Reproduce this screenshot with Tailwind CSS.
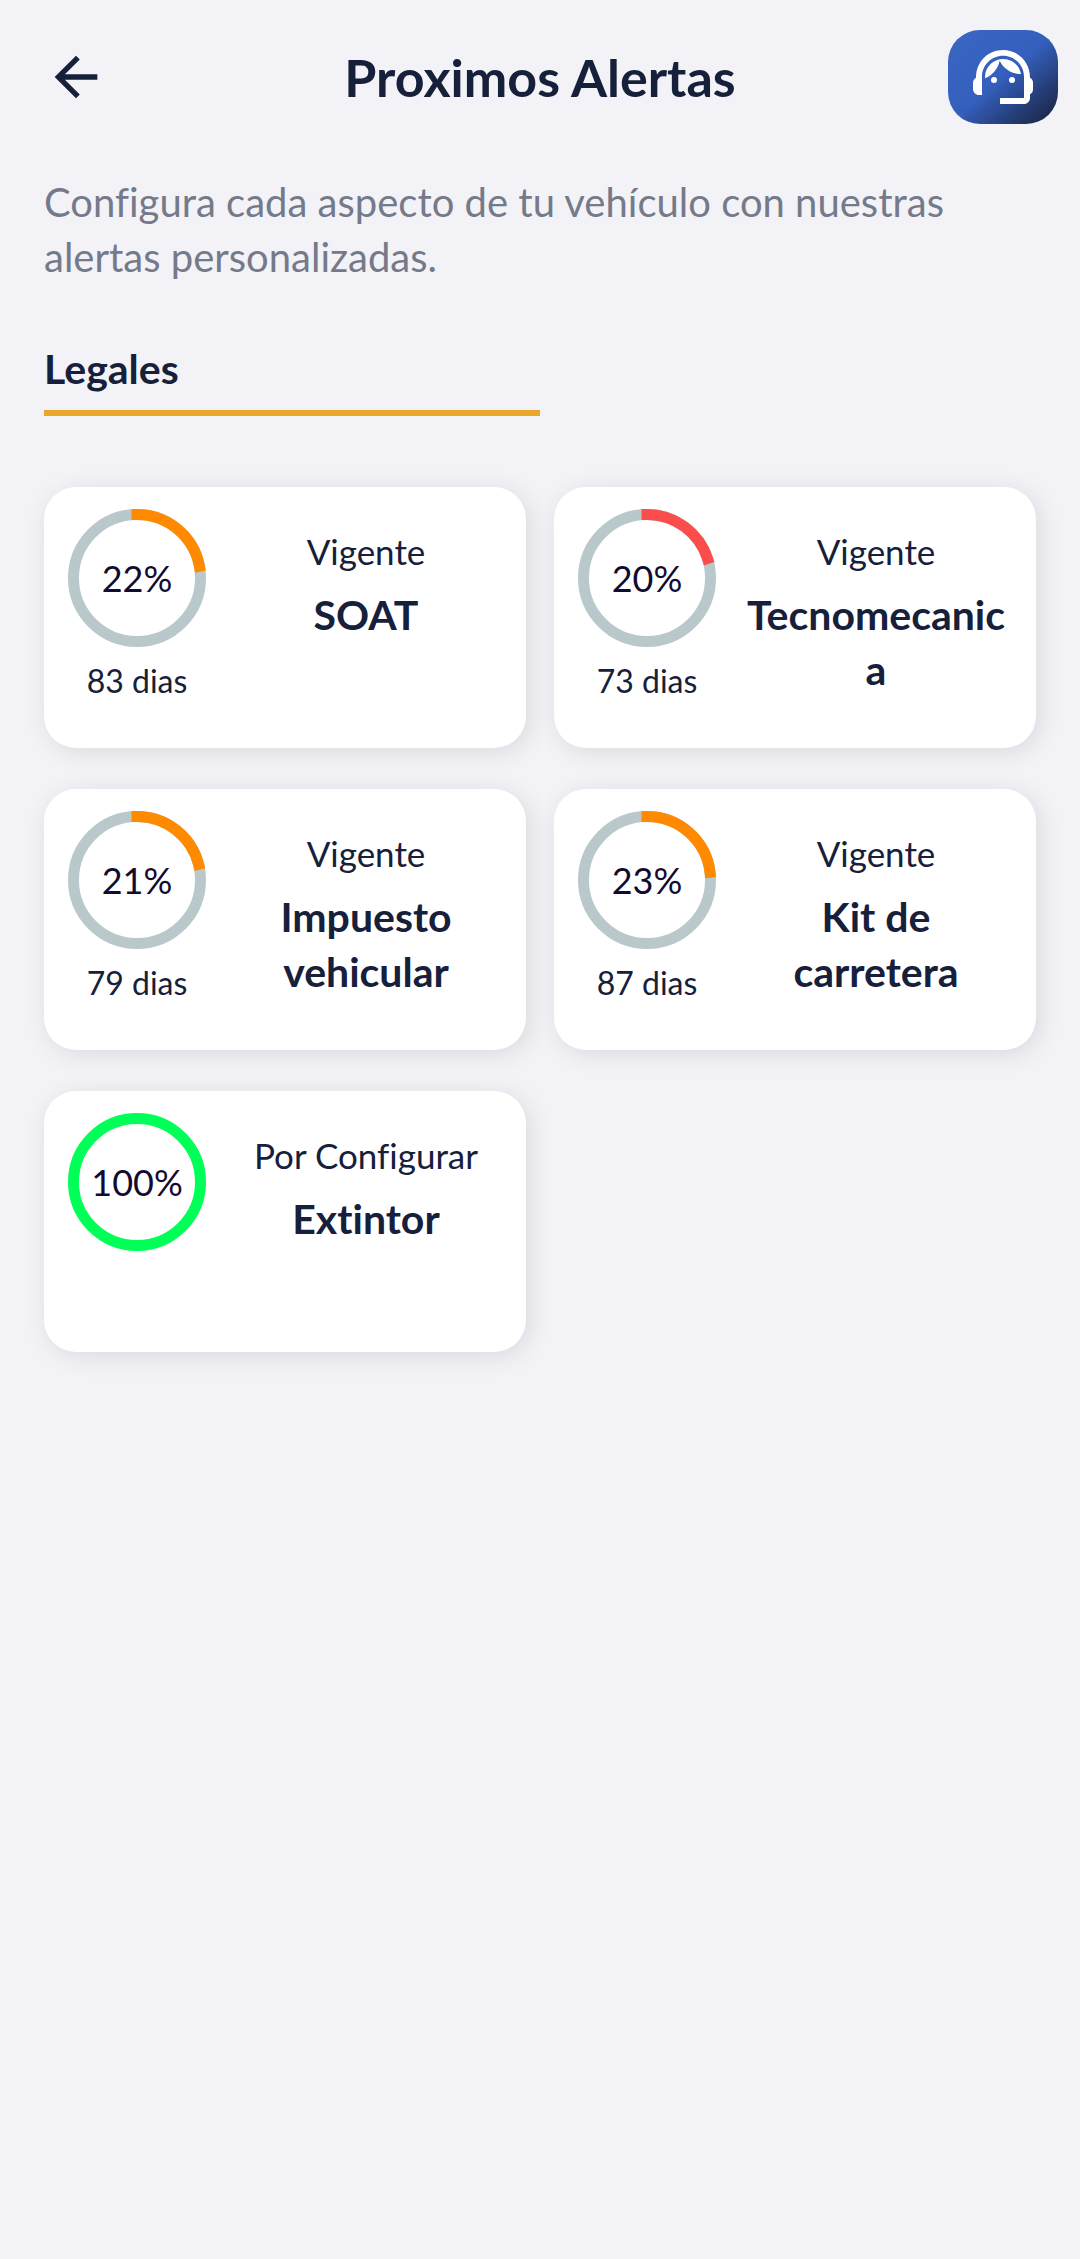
<!DOCTYPE html>
<html lang="es">
<head>
    <meta charset="UTF-8">
    <meta name="viewport" content="width=device-width, initial-scale=1.0">
    <script src="https://cdn.jsdelivr.net/npm/@tailwindcss/browser@4"></script>
    <title>Proximos Alertas</title>
</head>

<body class="min-h-screen bg-[#f2f2f7] font-['Lato','Open_Sans',sans-serif] [font-variant-ligatures:none] text-[#17203a]">
    <header class="grid grid-cols-[1fr_auto_1fr] items-center px-[22px] pt-[30px]">
        <button type="button" aria-label="Volver" class="w-16 h-16 ml-[22px] justify-self-start">
            <svg viewBox="0 0 24 24" class="w-16 h-16 fill-current"><path d="M20 11H7.83l5.59-5.59L12 4l-8 8 8 8 1.41-1.41L7.83 13H20v-2z"/></svg>
        </button>
        <h1 class="text-[52px] leading-[60px] font-bold">Proximos Alertas</h1>
        <button type="button" aria-label="Soporte" class="w-[110px] h-[94px] justify-self-end flex items-center justify-center rounded-[32px] bg-linear-to-br from-[#3a66c4] via-[#345fbd] via-50% to-[#17203a] text-white">
            <svg viewBox="0 0 24 24" class="w-[72px] h-[72px] fill-current">
                <path d="M21 12.22C21 6.73 16.74 3 12 3c-4.69 0-9 3.65-9 9.28-.6.34-1 .98-1 1.72v2c0 1.1.9 2 2 2h1v-6.1c0-3.87 3.13-7 7-7s7 3.13 7 7V19h-8v2h8c1.1 0 2-.9 2-2v-1.22c.59-.31 1-.92 1-1.64v-2.3c0-.7-.41-1.31-1-1.62z"/>
                <circle cx="9" cy="13" r="1"/>
                <circle cx="15" cy="13" r="1"/>
                <path d="M18 11.03C17.52 8.18 15.04 6 12.05 6c-3.03 0-6.29 2.51-6.03 6.45 2.47-1.01 4.33-3.21 4.86-5.89 1.31 2.63 4 4.44 7.12 4.47z"/>
            </svg>
        </button>
    </header>

    <main class="px-11 pt-[51px]">
        <p class="text-[40px] leading-[55px] text-[#757a8a]">Configura cada aspecto de tu vehículo con nuestras alertas personalizadas.</p>

        <h2 class="w-1/2 mt-14 pb-3.5 border-b-6 border-[#eba72c] text-[41px] leading-[55px] font-bold">Legales</h2>

        <section class="grid grid-cols-2 gap-x-7 gap-y-[41px] mt-[71px]">
            <article class="flex min-h-[261px] pl-6 rounded-[32px] bg-white shadow-[4px_4px_24px_rgba(0,0,0,0.1)]">
                <div class="w-[138px] shrink-0 pt-[22px] text-center">
                    <div class="grid place-items-center">
                        <svg viewBox="0 0 276 276" class="col-start-1 row-start-1 w-[138px] h-[138px] -rotate-90" fill="none" stroke-width="22">
                            <circle cx="138" cy="138" r="127" stroke="#b9c8ca"/>
                            <circle cx="138" cy="138" r="127" stroke="#ff8a00" stroke-linecap="square" pathLength="100" stroke-dasharray="22 100"/>
                        </svg>
                        <span class="col-start-1 row-start-1 text-[36px] leading-[55px] text-[#120b2e]">22%</span>
                    </div>
                    <p class="mt-2.5 text-[32px] leading-[48px]">83 dias</p>
                </div>
                <div class="flex-1 px-7 pt-[38px] text-center">
                    <p class="text-[35px] leading-[52px]">Vigente</p>
                    <h3 class="mt-2.5 text-[41px] leading-[55px] font-bold wrap-anywhere">SOAT</h3>
                </div>
            </article>

            <article class="flex min-h-[261px] pl-6 rounded-[32px] bg-white shadow-[4px_4px_24px_rgba(0,0,0,0.1)]">
                <div class="w-[138px] shrink-0 pt-[22px] text-center">
                    <div class="grid place-items-center">
                        <svg viewBox="0 0 276 276" class="col-start-1 row-start-1 w-[138px] h-[138px] -rotate-90" fill="none" stroke-width="22">
                            <circle cx="138" cy="138" r="127" stroke="#b9c8ca"/>
                            <circle cx="138" cy="138" r="127" stroke="#fc4d4d" stroke-linecap="square" pathLength="100" stroke-dasharray="20 100"/>
                        </svg>
                        <span class="col-start-1 row-start-1 text-[36px] leading-[55px] text-[#120b2e]">20%</span>
                    </div>
                    <p class="mt-2.5 text-[32px] leading-[48px]">73 dias</p>
                </div>
                <div class="flex-1 px-7 pt-[38px] text-center">
                    <p class="text-[35px] leading-[52px]">Vigente</p>
                    <h3 class="mt-2.5 text-[41px] leading-[55px] font-bold wrap-anywhere">Tecnomecanica</h3>
                </div>
            </article>

            <article class="flex min-h-[261px] pl-6 rounded-[32px] bg-white shadow-[4px_4px_24px_rgba(0,0,0,0.1)]">
                <div class="w-[138px] shrink-0 pt-[22px] text-center">
                    <div class="grid place-items-center">
                        <svg viewBox="0 0 276 276" class="col-start-1 row-start-1 w-[138px] h-[138px] -rotate-90" fill="none" stroke-width="22">
                            <circle cx="138" cy="138" r="127" stroke="#b9c8ca"/>
                            <circle cx="138" cy="138" r="127" stroke="#ff8a00" stroke-linecap="square" pathLength="100" stroke-dasharray="21 100"/>
                        </svg>
                        <span class="col-start-1 row-start-1 text-[36px] leading-[55px] text-[#120b2e]">21%</span>
                    </div>
                    <p class="mt-2.5 text-[32px] leading-[48px]">79 dias</p>
                </div>
                <div class="flex-1 px-7 pt-[38px] text-center">
                    <p class="text-[35px] leading-[52px]">Vigente</p>
                    <h3 class="mt-2.5 text-[41px] leading-[55px] font-bold wrap-anywhere">Impuesto vehicular</h3>
                </div>
            </article>

            <article class="flex min-h-[261px] pl-6 rounded-[32px] bg-white shadow-[4px_4px_24px_rgba(0,0,0,0.1)]">
                <div class="w-[138px] shrink-0 pt-[22px] text-center">
                    <div class="grid place-items-center">
                        <svg viewBox="0 0 276 276" class="col-start-1 row-start-1 w-[138px] h-[138px] -rotate-90" fill="none" stroke-width="22">
                            <circle cx="138" cy="138" r="127" stroke="#b9c8ca"/>
                            <circle cx="138" cy="138" r="127" stroke="#ff8a00" stroke-linecap="square" pathLength="100" stroke-dasharray="23 100"/>
                        </svg>
                        <span class="col-start-1 row-start-1 text-[36px] leading-[55px] text-[#120b2e]">23%</span>
                    </div>
                    <p class="mt-2.5 text-[32px] leading-[48px]">87 dias</p>
                </div>
                <div class="flex-1 px-7 pt-[38px] text-center">
                    <p class="text-[35px] leading-[52px]">Vigente</p>
                    <h3 class="mt-2.5 text-[41px] leading-[55px] font-bold wrap-anywhere">Kit de carretera</h3>
                </div>
            </article>

            <article class="flex min-h-[261px] pl-6 rounded-[32px] bg-white shadow-[4px_4px_24px_rgba(0,0,0,0.1)]">
                <div class="w-[138px] shrink-0 pt-[22px] text-center">
                    <div class="grid place-items-center">
                        <svg viewBox="0 0 276 276" class="col-start-1 row-start-1 w-[138px] h-[138px]" fill="none" stroke-width="22">
                            <circle cx="138" cy="138" r="127" stroke="#00ff57"/>
                        </svg>
                        <span class="col-start-1 row-start-1 text-[36px] leading-[55px] text-[#120b2e]">100%</span>
                    </div>
                </div>
                <div class="flex-1 px-7 pt-[38px] text-center">
                    <p class="text-[35px] leading-[52px]">Por Configurar</p>
                    <h3 class="mt-2.5 text-[41px] leading-[55px] font-bold wrap-anywhere">Extintor</h3>
                </div>
            </article>
        </section>
    </main>
</body>
</html>
